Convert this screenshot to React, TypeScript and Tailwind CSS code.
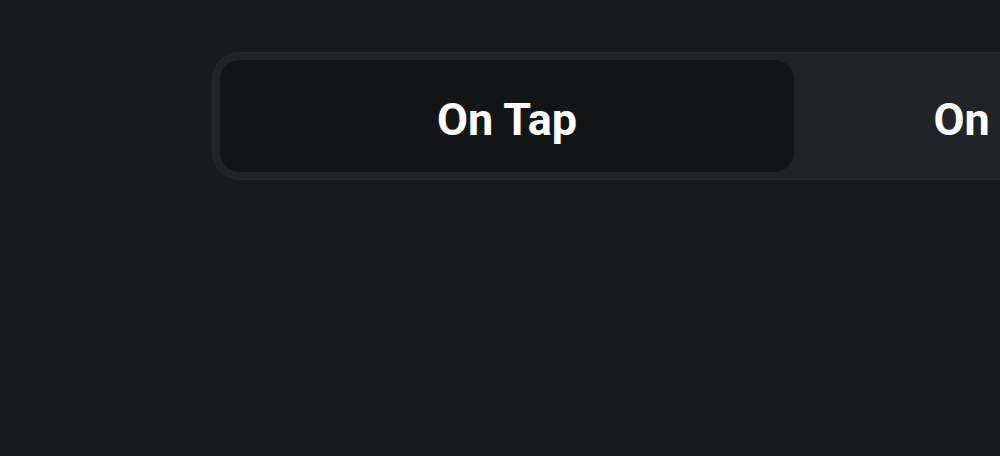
const tabs = ['On Tap', 'On Long Press'];

export default function App() {
  return (
    <main
      className="h-[456px] w-[1000px] overflow-hidden bg-[#181b1e] pt-[52px] pl-[212px]"
      style={{ fontFamily: 'Roboto, "Liberation Sans", sans-serif' }}
    >
      <div className="flex w-[1164px] rounded-[28px] bg-[#202328] p-2 shadow-[inset_0_0_0_1px_#262a30]">
        {tabs.map((tab, i) => (
          <button
            key={tab}
            className={
              i === 0
                ? 'flex h-[112px] w-[574px] items-center justify-center rounded-[20px] bg-[#131416] pt-2 text-[45px] font-bold text-white'
                : 'flex h-[112px] w-[574px] items-center justify-center rounded-[20px] pt-2 text-[45px] font-bold text-white'
            }
          >
            {tab}
          </button>
        ))}
      </div>
    </main>
  );
}
